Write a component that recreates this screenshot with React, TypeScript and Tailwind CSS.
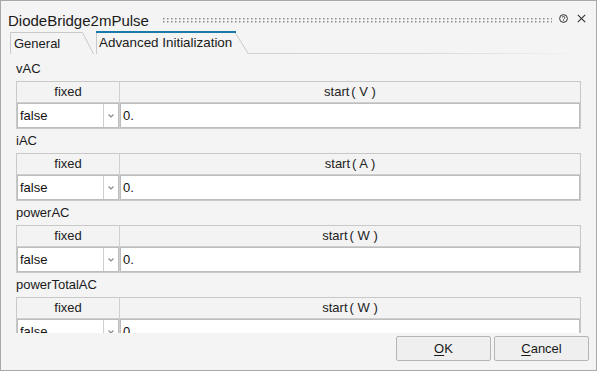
import React from "react";

const sections = [
  { name: "vAC", unit: "V" },
  { name: "iAC", unit: "A" },
  { name: "powerAC", unit: "W" },
  { name: "powerTotalAC", unit: "W" },
];

function Chevron() {
  return (
    <svg width="6" height="4" viewBox="0 0 6 4">
      <path d="M0.5 0.5 L3 3 L5.5 0.5" fill="none" stroke="#8a8a8a" strokeWidth="1.2" />
    </svg>
  );
}

function Section({ name, unit }: { name: string; unit: string }) {
  return (
    <div className="flex flex-col">
      <div className="h-[24px] flex items-center pl-[15px] text-[13px] text-[#1a1a1a]">{name}</div>
      <div className="ml-[15px] w-[565px] h-[48px] shrink-0 border border-[#c8c8c8] bg-[#f3f3f3] flex flex-col">
        <div className="h-[21px] flex border-b border-[#cfcfcf] text-[13px] text-[#222]">
          <div className="w-[103px] border-r border-[#cfcfcf] flex items-center justify-center">fixed</div>
          <div className="flex-1 flex items-center justify-center">
            start<span className="ml-[2px]">( {unit} )</span>
          </div>
        </div>
        <div className="h-[25px] flex text-[13px] text-[#111]">
          <div className="w-[103px] border-r border-[#cfcfcf] flex">
            <div className="flex-1 bg-white border border-[#bdbdbd] flex">
              <div className="flex-1 flex items-center pl-[2px]">false</div>
              <div className="w-[15px] border-l border-[#cfcfcf] flex items-center justify-center">
                <Chevron />
              </div>
            </div>
          </div>
          <div className="flex-1 bg-white border border-[#bdbdbd] flex items-center pl-[2px]">0.</div>
        </div>
      </div>
    </div>
  );
}

export default function App() {
  return (
    <div
      className="w-[597px] h-[371px] border border-[#a9a9a9] bg-[#f4f4f4] flex flex-col overflow-hidden"
      style={{ fontFamily: '"Liberation Sans", Arial, sans-serif' }}
    >
      {/* title bar */}
      <div className="h-[30px] shrink-0 flex items-center pt-[9px] pl-[7px] pr-[10px]">
        <span className="text-[15px] text-[#1a1a1a] leading-none">DiodeBridge2mPulse</span>
        <svg className="flex-1 ml-[14px] mr-[7px] h-[5px]" height="5">
          <defs>
            <pattern id="dots" width="4" height="5" patternUnits="userSpaceOnUse">
              <rect x="0" y="0" width="1.5" height="1.5" fill="#8c8c8c" />
              <rect x="0" y="3" width="1.5" height="1.5" fill="#8c8c8c" />
            </pattern>
          </defs>
          <rect width="100%" height="5" fill="url(#dots)" />
        </svg>
        <div className="flex items-center gap-[9px] -mt-[5px]">
          <svg width="9" height="9" viewBox="0 0 9 9">
            <circle cx="4.5" cy="4.5" r="3.9" fill="none" stroke="#333" strokeWidth="1" />
            <path d="M3.2 3.6 A1.3 1.3 0 1 1 5 4.8 C4.6 5 4.5 5.2 4.5 5.7" fill="none" stroke="#333" strokeWidth="0.9" />
            <circle cx="4.5" cy="6.8" r="0.55" fill="#333" />
          </svg>
          <svg width="9" height="9" viewBox="0 0 9 9">
            <path d="M0.8 0.8 L8.2 8.2 M8.2 0.8 L0.8 8.2" stroke="#333" strokeWidth="1.1" />
          </svg>
        </div>
      </div>

      {/* tabs */}
      <div className="h-[23px] shrink-0 flex items-end pl-[9px]">
        <div className="relative w-[84px] h-[22px] flex items-center pl-[4px] text-[13px] text-[#1a1a1a]">
          <svg className="absolute inset-0" width="84" height="22">
            <path d="M0.5 22 V0.5 H72.5 L83.5 22" fill="none" stroke="#c9c9c9" strokeWidth="1" />
          </svg>
          <span className="relative pt-[1px]">General</span>
        </div>
        <div className="relative ml-[2px] w-[153px] h-[23px] flex items-center pl-[3px] text-[13.4px] text-[#1a1a1a]">
          <svg className="absolute inset-0" width="153" height="23">
            <path d="M0.5 23 V1" fill="none" stroke="#c9c9c9" strokeWidth="1" />
            <path d="M139 1.5 L152.5 23" fill="none" stroke="#c9c9c9" strokeWidth="1" />
            <rect x="0" y="0" width="140" height="2" fill="#1a7aa8" />
          </svg>
          <span className="relative pt-[1px]">Advanced Initialization</span>
        </div>
        <div className="flex-1 h-px mr-[10px] bg-gradient-to-r from-[#d2d2d2] via-[#d8d8d8] to-transparent" />
      </div>

      {/* content */}
      <div className="h-[279px] shrink-0 overflow-hidden pt-[3px]">
        {sections.map((s) => (
          <Section key={s.name} name={s.name} unit={s.unit} />
        ))}
      </div>

      {/* buttons */}
      <div className="flex-1 flex justify-end items-start pt-[3px] pr-[7px] gap-[3px]">
        <button className="w-[95px] h-[25px] border border-[#b5b5b5] bg-[#efefef] rounded-[2px] text-[13px] text-[#1a1a1a]">
          <span className="underline underline-offset-2">O</span>K
        </button>
        <button className="w-[95px] h-[25px] border border-[#b5b5b5] bg-[#efefef] rounded-[2px] text-[13px] text-[#1a1a1a]">
          <span className="underline underline-offset-2">C</span>ancel
        </button>
      </div>
    </div>
  );
}
